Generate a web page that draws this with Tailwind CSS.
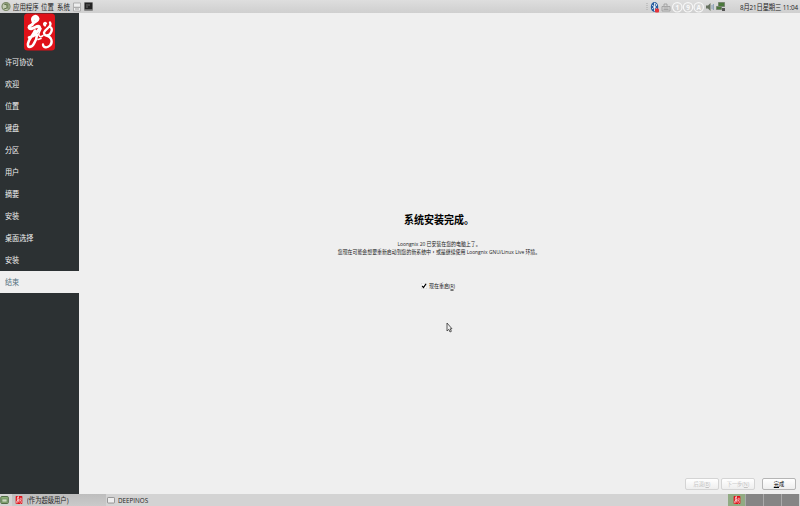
<!DOCTYPE html>
<html lang="zh-CN"><head><meta charset="utf-8"><title>Loongnix</title>
<script src="https://cdn.jsdelivr.net/npm/@tailwindcss/browser@4"></script></head>
<body class="w-[800px] h-[506px] overflow-hidden bg-[#efefef] font-['Open_Sans','Noto_Sans_CJK_SC',sans-serif] text-[#222]">
<svg class="hidden"><defs><symbol id="dragon" viewBox="0 0 31 37">
<rect width="31" height="37" rx="3.5" fill="#df1119"/>
<g fill="none" stroke="#fff" stroke-linecap="round" stroke-linejoin="round"><path d="M9 8C7 3 13 1 14 5c0 3-4 3-5 5-1 3-4 1-4 4 1 3 5 0 8-1 5-1 2 4-1 6" stroke-width="3"/><path d="M11 5h2" stroke-width="3.5"/><path d="M11 17c-2 5-6 8-7 13-1 5 4 4 6 0 2-3 3-6 3-9M5 24c3-1 5-1 7-4" stroke-width="2.6"/><path d="M17 15c-1 3-3 5-2 7 1 2 3 1 4 0M14 26l3-1" stroke-width="1.6"/><path d="M26 9c3 4-5 6-6 10 0 4 5 4 7 0 1-2 1-4 0-5M21 12c-2-2 0-3 1-2M22 22c6 1 7 7 4 10-3 3-7 2-7-1" stroke-width="2.3"/></g></symbol></defs></svg>
<div class="flex flex-col w-[800px] h-[506px]">
<header class="flex items-center h-[13px] shrink-0 bg-linear-to-b from-[#dedede] to-[#cfcfcf] text-[6.4px] leading-[13px] whitespace-nowrap">
<svg class="ml-[1px] w-[10px] h-[11px]" viewBox="0 0 10 11"><circle cx="5" cy="5.5" r="4" fill="#c5ceb5" stroke="#7c8a68" stroke-width="1.2"/><path d="M3 3l3 1v3L3 8M4 3h3v5" fill="none" stroke="#60744b"/></svg>
<span class="ml-[2px] w-[28px] scale-y-125">应用程序</span><span class="w-[16px] scale-y-125">位置</span><span class="w-[16px] scale-y-125">系统</span>
<svg class="w-[8px] h-[10px]" viewBox="0 0 8 10"><path d="M.5 1h7v8h-7z" fill="#eee" stroke="#999" stroke-width=".7"/><path d="M1 5.3h6M2 7h4" stroke="#888" stroke-width=".8"/></svg>
<svg class="ml-[3px] w-[9px] h-[9px]" viewBox="0 0 9 9"><rect width="9" height="9" rx="1" fill="#888"/><rect x=".8" y=".8" width="7.4" height="6.5" fill="#222"/><path d="M2 3h4M2 5h2" stroke="#888" stroke-width=".7"/></svg>
<div class="ml-auto flex items-center shrink-0">
<svg class="w-[3px] h-[10px] mr-[1px]" viewBox="0 0 3 10"><path d="M1 1v8" stroke="#aaa" stroke-dasharray="1 1"/></svg>
<svg class="w-[10px] h-[12px]" viewBox="0 0 10 12"><ellipse cx="4.5" cy="6" rx="3.7" ry="5" fill="#265c9e"/><path d="M2 4l5 4-2.5 2V2L7 4 2 8" stroke="#fff" fill="none" stroke-width=".8"/><rect x="5" y="7.5" width="4" height="4" rx="1" fill="#e4333b"/></svg>
<svg class="ml-[1px] w-[10px] h-[10px]" viewBox="0 0 10 10"><path d="M1 4.5h8V9H1zM3 4V2h3v2M2.5 6h5M2.5 7.5h5" fill="none" stroke="#999" stroke-width=".8"/></svg>
<svg class="ml-[1px] w-[32px] h-[12px]" viewBox="0 0 32 12"><g fill="none" stroke="#f7f7f7" stroke-width="1.2"><circle cx="5.3" cy="6.3" r="4.7"/><circle cx="16" cy="6.3" r="4.7"/><circle cx="26.7" cy="6.3" r="4.7"/></g><g fill="#fafafa" font-size="6.5" font-weight="bold" text-anchor="middle"><text x="5.3" y="8.7">1</text><text x="16" y="8.7">9</text><text x="26.7" y="8.7">A</text></g></svg>
<svg class="ml-[1px] w-[9px] h-[10px]" viewBox="0 0 9 10"><path d="M1 3.5h2L5.5 1v8L3 6.5H1z" fill="#66715f"/><path d="M7 3v4M8.4 2v6" stroke="#7893b0" stroke-width=".8"/></svg>
<svg class="ml-[1px] w-[11px] h-[11px]" viewBox="0 0 11 11"><path d="M3.5 1.5h6v4h-6zM1.5 5.5h5v3h-5z" fill="#4b783b" stroke="#768571"/><path d="M7 7h3v3H7z" fill="#555"/></svg>
<span class="ml-[14px] mr-[2px] w-[58px] text-right text-[6.3px] tracking-[-.14px] scale-y-125">8月21日星期三 11:04</span></div>
</header>
<div class="flex flex-1 min-h-0">
<aside class="w-[79px] shrink-0 bg-[#2c3133] text-[#f2f2f2] text-[7.1px] leading-[22px]">
<div class="h-[38px] flex justify-center"><svg class="w-[31px] h-[38px]"><use href="#dragon"/></svg></div>
<nav class="[&>div]:h-[22px] [&>div]:pl-[5px] [&_span]:inline-block [&_span]:scale-y-115">
<div><span>许可协议</span></div><div><span>欢迎</span></div><div><span>位置</span></div><div><span>键盘</span></div><div><span>分区</span></div><div><span>用户</span></div><div><span>摘要</span></div><div><span>安装</span></div><div><span>桌面选择</span></div><div><span>安装</span></div><div class="bg-[#efefef] text-[#526f7d]"><span>结束</span></div></nav></aside>
<main class="flex-1 flex flex-col items-center bg-[#efefef] whitespace-nowrap">
<h1 class="mt-[198px] mr-[1px] h-[17px] text-[10px] leading-[17px] font-bold text-black scale-y-115">系统安装完成。</h1>
<p class="mt-[12px] mr-px h-[8px] text-[4.93px] leading-[8px] scale-y-115">Loongnix 20 已安装在您的电脑上了。</p>
<p class="mr-px h-[8px] text-[4.93px] leading-[8px] scale-y-115">您现在可能会想要重新启动到您的新系统中<span lang="zh-TW" class="font-['Noto_Sans_CJK_TC',sans-serif]">，</span>或是继续使用 Loongnix GNU/Linux Live 环境。</p>
<label class="mt-[26px] mr-[3px] flex items-center gap-[2px] h-[8px] text-[5px] leading-[8px]"><svg class="w-[6px] h-[6px]" viewBox="0 0 6 6"><rect x=".2" y=".2" width="5.6" height="5.6" fill="#fff" stroke="#ccc" stroke-width=".4"/><path d="M1.2 3l1.3 1.6L5 .8" fill="none" stroke="#000" stroke-width="1.2"/></svg><span class="scale-y-115">现在重启(<u>R</u>)</span></label>
<div class="mt-auto mb-[4px] mr-[4px] self-end flex text-[5.2px] leading-[9px] text-center [&>button]:h-[12px] [&>button]:rounded-[2px] [&>button]:border [&>button]:bg-linear-to-b [&>button]:from-white [&>button]:to-[#eee]"><button class="w-[34px] border-[#d4d4d4] text-[#c2c2c2]">后退(<u>B</u>)</button><button class="ml-[2px] w-[34px] border-[#d4d4d4] text-[#c2c2c2]">下一步(<u>N</u>)</button><button class="ml-[7px] w-[34px] border-[#b5b5b5] text-black"><u>完</u>成</button></div>
</main></div>
<footer class="flex items-center h-[12px] shrink-0 bg-[#d3d3d3] text-[6.3px] leading-[12px] whitespace-nowrap">
<svg class="w-[9px] h-[10px]" viewBox="0 0 9 10"><rect x=".8" y="1.5" width="7.5" height="7" rx="1" fill="#8caf78" stroke="#536c48"/><path d="M2 4h5v3H2z" fill="#c9d8bd" stroke="#607c54" stroke-width=".6"/></svg>
<div class="ml-[3px] w-[94px] h-[12px] pl-[3px] flex items-center bg-linear-to-b from-[#bdbdbd] to-[#cacaca]"><svg class="w-[8px] h-[8px]"><use href="#dragon"/></svg><span class="ml-[4px] mt-[1px] scale-y-120">(作为超级用户)</span></div>
<svg class="ml-[1px] w-[8px] h-[7px]" viewBox="0 0 8 7"><rect x=".5" y=".5" width="7" height="5.5" rx=".7" fill="#eee" stroke="#777" stroke-width=".7"/></svg><span class="ml-[3px] mt-[1px] scale-y-120">DEEPINOS</span>
<div class="ml-auto flex h-[12px] gap-px bg-[#aaa] mr-px"><div class="w-[17px] flex justify-center items-center bg-[#91ab83]"><svg class="w-[8px] h-[8px]"><use href="#dragon"/></svg></div><div class="w-[17px] bg-[#858585]"></div><div class="w-[17px] bg-[#858585]"></div><div class="w-[17px] bg-[#858585]"></div></div>
</footer></div>
<svg class="absolute left-[446px] top-[322px] w-[7px] h-[11px]" viewBox="0 0 7 11"><path d="M1 1v8l1.8-1.7L4 10l1.4-.7-1.2-2.5H6z" fill="#eee" stroke="#333" stroke-width=".8"/></svg>
</body></html>
